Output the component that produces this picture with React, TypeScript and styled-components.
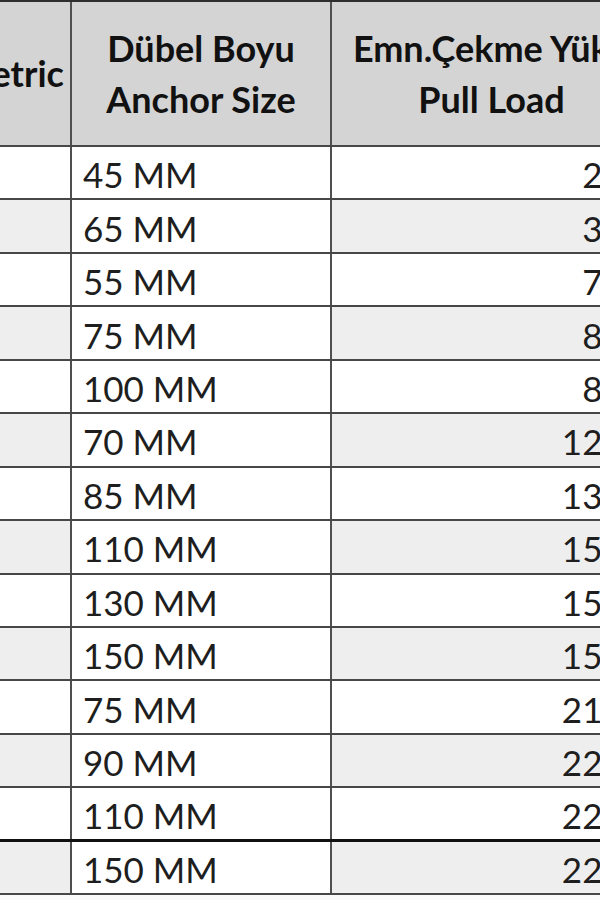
import styled, { createGlobalStyle, css } from "styled-components";

interface RowData {
  size: string;
  load: string;
}

const rows: RowData[] = [
  { size: "45 MM", load: "2,40" },
  { size: "65 MM", load: "3,60" },
  { size: "55 MM", load: "7,20" },
  { size: "75 MM", load: "8,40" },
  { size: "100 MM", load: "8,90" },
  { size: "70 MM", load: "12,50" },
  { size: "85 MM", load: "13,80" },
  { size: "110 MM", load: "15,20" },
  { size: "130 MM", load: "15,60" },
  { size: "150 MM", load: "15,90" },
  { size: "75 MM", load: "21,30" },
  { size: "90 MM", load: "22,10" },
  { size: "110 MM", load: "22,50" },
  { size: "150 MM", load: "22,80" },
];

const GlobalStyle = createGlobalStyle`
  html, body {
    margin: 0;
    padding: 0;
    background: #ffffff;
  }
`;

const Page = styled.div`
  width: 600px;
  height: 900px;
  overflow: hidden;
  background: #fafafa;
`;

const Sheet = styled.div`
  width: 701px;
  margin-left: -48px;
  border-top: 2px solid #2e2e2e;
  font-family: Lato, "Open Sans", sans-serif;
  color: #1e1e1e;
`;

const Row = styled.div<{ $header?: boolean; $heavy?: boolean }>`
  display: grid;
  grid-template-columns: 120px 260px 321px;
  box-sizing: border-box;
  height: ${({ $header }) => ($header ? "145px" : "53.45px")};
  border-bottom: ${({ $heavy }) => ($heavy ? "3px solid #111111" : "2px solid #474747")};
`;

const Cell = styled.div<{ $shade?: boolean; $align?: "left" | "center" | "right" }>`
  display: flex;
  align-items: center;
  box-sizing: border-box;
  border-right: 2px solid #4f4f4f;
  background: ${({ $shade }) => ($shade ? "#eeeeee" : "#ffffff")};
  font-size: 35px;
  white-space: nowrap;
  overflow: hidden;
  padding-top: 3px;

  ${({ $align }) =>
    $align === "left"
      ? css`
          justify-content: flex-start;
          padding-left: 11px;
        `
      : $align === "right"
      ? css`
          justify-content: flex-end;
          padding-right: 0;
        `
      : css`
          justify-content: center;
        `}
`;

const HeadCell = styled(Cell)`
  background: #d4d4d4;
  font-weight: 700;
  color: #111111;
  text-align: center;
  line-height: 51px;
  padding-top: 0;
  font-size: 36px;
`;

const App = () => {
  return (
    <>
      <GlobalStyle />
      <Page>
        <Sheet>
          <Row $header>
            <HeadCell>Metric</HeadCell>
            <HeadCell>
              Dübel Boyu
              <br />
              Anchor Size
            </HeadCell>
            <HeadCell>
              Emn.Çekme Yükü
              <br />
              Pull Load
            </HeadCell>
          </Row>
          {rows.map((row, i) => {
            const shade = i % 2 === 1;
            return (
              <Row key={i} $heavy={i === rows.length - 2}>
                <Cell $shade={shade} />
                <Cell $align="left">{row.size}</Cell>
                <Cell $shade={shade} $align="right">
                  {row.load}
                </Cell>
              </Row>
            );
          })}
        </Sheet>
      </Page>
    </>
  );
};

export default App;
